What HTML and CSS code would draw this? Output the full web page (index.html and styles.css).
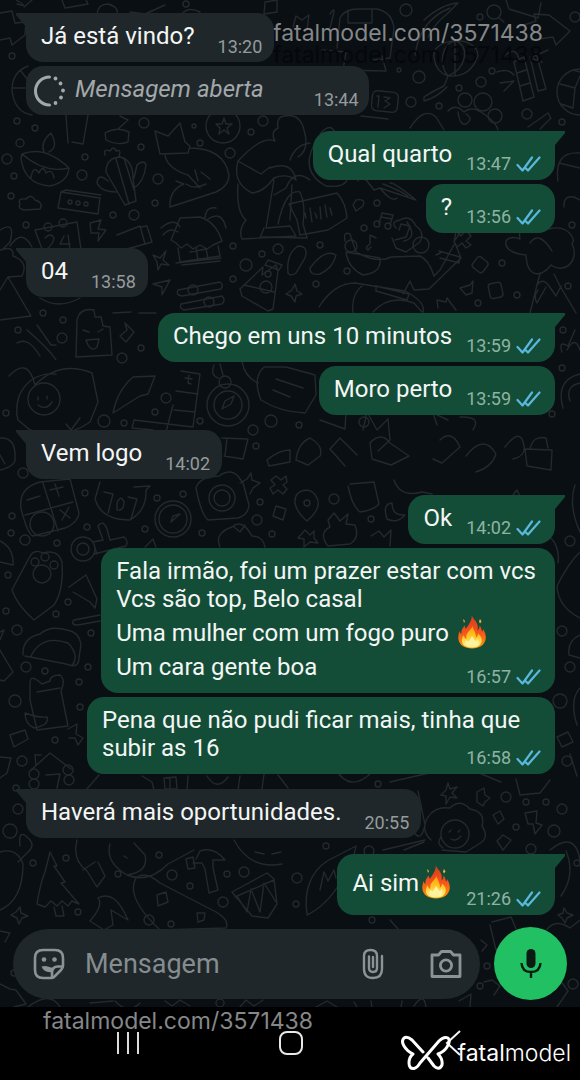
FILE: index.html
```html
<!DOCTYPE html>
<html lang="pt-BR">
<head>
<meta charset="utf-8">
<meta name="viewport" content="width=device-width, initial-scale=1">
<title>Conversa</title>
<link rel="stylesheet" href="styles.css">
</head>
<body>
<svg class="defs" width="0" height="0" aria-hidden="true">
  <defs>
    <linearGradient id="flame" x1="0" y1="0" x2="0" y2="1">
      <stop offset="0" stop-color="#d93a1c"/><stop offset=".5" stop-color="#f4511e"/><stop offset="1" stop-color="#ffa000"/>
    </linearGradient>
    <linearGradient id="core" x1="0" y1="0" x2="0" y2="1">
      <stop offset="0" stop-color="#ff9800"/><stop offset=".5" stop-color="#ffc928"/><stop offset="1" stop-color="#fff59d"/>
    </linearGradient>
    <symbol id="fire" viewBox="0 0 28 34">
      <path fill="url(#flame)" d="M13.600 0C14.500 3 18.500 6 19.500 10C20 12 19.800 14 19.500 15.500C21 14.500 21.500 12.500 21.500 10.500C23.500 12.500 23.500 15 24 16.500C24.800 16 25 15 25 14C27 17 28 20 27.800 23C27.200 30 21 33.500 14 33.500C7 33.500 .5 30 .3 23C.2 20 1 18 1.500 16C2 17.500 2.500 18.500 3.500 19C3 15 5 12.500 7 10.500C7 12 7.300 13 8 13.800C10.500 10 14.500 5 13.600 0Z"/>
      <path fill="#f9b234" d="M5 4L7 6L6 8L5.500 6ZM22 4L23.500 6.500L22 8.500L21 6.500Z"/>
      <path fill="url(#core)" d="M14.500 11C15 14 17 16 17.500 19C18 21 18 22 17.500 23C19.500 22 20 20 20 18.500C23 21 24.500 24 23.500 27C22 31.500 18 32.500 14 32.500C9 32.500 5 31 4 27C3.500 24 4.500 22 5.500 20.500C6 22 7 23.500 8.500 24C8 21 8.500 19 10.500 16.500C12 14.800 14 13 14.500 11Z"/>
      <path fill="#fff3a0" d="M14 21C16 23 16 25 17.500 26C19 25.500 19.500 24.500 19.500 23.500C22 27 20.500 32 14 32C7.500 32 6.500 27.500 8 25C9 26 10 26.500 11 26C12.500 25 12.500 23 14 21Z"/>
    </symbol>
    <symbol id="read" viewBox="0 0 25 16">
      <path fill="none" stroke="#59b8dc" stroke-width="2.200" stroke-linecap="round" stroke-linejoin="round" d="M1.500 9L6.500 14.500L16 1.500M10 12.500L12 14.500L23.500 1.500"/>
    </symbol>
  </defs>
</svg>

<main class="chat">
  <svg class="doodles" viewBox="0 0 580 1007" preserveAspectRatio="xMidYMin slice" aria-hidden="true">
    <g id="dots">
      <circle cx="186" cy="4" r="3"/><circle cx="406" cy="10" r="6"/><circle cx="12" cy="56" r="3"/><circle cx="17" cy="121" r="3"/><circle cx="35" cy="128" r="3"/><circle cx="144" cy="123" r="5"/><circle cx="194" cy="126" r="2"/><circle cx="263" cy="121" r="5"/><circle cx="251" cy="132" r="3"/><circle cx="20" cy="143" r="4"/><circle cx="7" cy="159" r="5"/><circle cx="85" cy="157" r="3"/><circle cx="141" cy="147" r="3"/><circle cx="200" cy="143" r="3"/><circle cx="230" cy="153" r="5"/><circle cx="82" cy="175" r="5"/><circle cx="158" cy="179" r="5"/><circle cx="14" cy="176" r="3"/><circle cx="11" cy="196" r="3"/><circle cx="155" cy="203" r="3"/><circle cx="113" cy="215" r="3"/><circle cx="134" cy="215" r="5"/><circle cx="26" cy="225" r="3"/><circle cx="233" cy="246" r="3"/><circle cx="246" cy="265" r="6"/><circle cx="262" cy="254" r="3"/><circle cx="278" cy="249" r="5"/><circle cx="233" cy="279" r="3"/><circle cx="43" cy="313" r="3"/><circle cx="63" cy="320" r="3"/><circle cx="18" cy="330" r="3"/><circle cx="62" cy="338" r="5"/><circle cx="141" cy="348" r="3"/><circle cx="122" cy="358" r="5"/><circle cx="419" cy="77" r="6"/><circle cx="399" cy="70" r="2"/><circle cx="492" cy="71" r="3"/><circle cx="481" cy="82" r="5"/><circle cx="459" cy="88" r="3"/><circle cx="411" cy="102" r="5"/><circle cx="439" cy="106" r="3"/><circle cx="465" cy="100" r="7"/><circle cx="483" cy="102" r="9"/><circle cx="495" cy="116" r="7"/><circle cx="527" cy="114" r="5"/><circle cx="562" cy="122" r="3"/><circle cx="575" cy="17" r="5"/><circle cx="480" cy="17" r="3"/><circle cx="377" cy="203" r="3"/><circle cx="364" cy="228" r="3"/><circle cx="320" cy="245" r="3"/><circle cx="347" cy="271" r="3"/><circle cx="316" cy="284" r="3"/><circle cx="502" cy="263" r="3"/><circle cx="517" cy="295" r="3"/><circle cx="478" cy="303" r="3"/><circle cx="568" cy="286" r="3"/><circle cx="572" cy="225" r="3"/><circle cx="563" cy="330" r="3"/><circle cx="562" cy="368" r="3"/><circle cx="166" cy="398" r="5"/><circle cx="271" cy="421" r="6"/><circle cx="200" cy="421" r="3"/><circle cx="364" cy="422" r="5"/><circle cx="299" cy="425" r="3"/><circle cx="552" cy="414" r="3"/><circle cx="6" cy="413" r="3"/><circle cx="104" cy="421" r="6"/><circle cx="124" cy="423" r="3"/><circle cx="155" cy="412" r="3"/><circle cx="253" cy="430" r="5"/><circle cx="256" cy="446" r="3"/><circle cx="23" cy="473" r="5"/><circle cx="85" cy="493" r="3"/><circle cx="157" cy="498" r="3"/><circle cx="183" cy="494" r="3"/><circle cx="257" cy="520" r="5"/><circle cx="260" cy="502" r="3"/><circle cx="12" cy="516" r="3"/><circle cx="25" cy="540" r="5"/><circle cx="11" cy="533" r="3"/><circle cx="57" cy="543" r="3"/><circle cx="87" cy="527" r="3"/><circle cx="145" cy="529" r="3"/><circle cx="202" cy="533" r="3"/><circle cx="272" cy="534" r="3"/><circle cx="334" cy="499" r="5"/><circle cx="371" cy="519" r="3"/><circle cx="8" cy="575" r="3"/><circle cx="68" cy="602" r="3"/><circle cx="6" cy="611" r="3"/><circle cx="56" cy="614" r="3"/><circle cx="17" cy="630" r="5"/><circle cx="91" cy="633" r="3"/><circle cx="26" cy="667" r="5"/><circle cx="45" cy="671" r="3"/><circle cx="88" cy="667" r="3"/><circle cx="79" cy="682" r="3"/><circle cx="15" cy="701" r="6"/><circle cx="80" cy="707" r="3"/><circle cx="55" cy="740" r="3"/><circle cx="22" cy="761" r="5"/><circle cx="16" cy="788" r="3"/><circle cx="18" cy="809" r="5"/><circle cx="10" cy="831" r="7"/><circle cx="570" cy="541" r="5"/><circle cx="562" cy="631" r="5"/><circle cx="570" cy="667" r="5"/><circle cx="560" cy="701" r="7"/><circle cx="567" cy="761" r="5"/><circle cx="33" cy="863" r="3"/><circle cx="66" cy="858" r="3"/><circle cx="118" cy="874" r="3"/><circle cx="159" cy="855" r="3"/><circle cx="172" cy="875" r="5"/><circle cx="190" cy="886" r="3"/><circle cx="227" cy="874" r="3"/><circle cx="244" cy="872" r="5"/><circle cx="223" cy="902" r="5"/><circle cx="78" cy="912" r="3"/><circle cx="149" cy="920" r="5"/><circle cx="171" cy="924" r="3"/><circle cx="326" cy="846" r="3"/><circle cx="369" cy="851" r="5"/><circle cx="297" cy="878" r="5"/><circle cx="296" cy="904" r="3"/><circle cx="378" cy="784" r="3"/><circle cx="506" cy="797" r="5"/><circle cx="526" cy="802" r="3"/><circle cx="546" cy="802" r="3"/><circle cx="562" cy="809" r="5"/><circle cx="554" cy="831" r="6"/><circle cx="516" cy="827" r="3"/><circle cx="531" cy="849" r="5"/><circle cx="577" cy="863" r="3"/><circle cx="372" cy="920" r="3"/><circle cx="487" cy="966" r="3"/><circle cx="573" cy="984" r="5"/><circle cx="480" cy="986" r="3"/><circle cx="220" cy="1003" r="4"/><circle cx="14" cy="973" r="3"/>
    </g>
    <g id="top-band">
      <path d="M0 13L12 11L15 23L26 22L25 35L12 45L10 38L0 40M16 0Q30 8 17 4M32 0L24 7M62 0L65 8L88 4L86 0M97 14Q98 4 108 4Q119 7 117 14M130 12L145 14L165 5M182 14Q188 6 200 12M265 2L277 0L277 12L264 14ZM28 66Q12 72 12 90Q14 112 32 115M20 70L28 80M13 88L25 88"/>
      <path d="M337 48L340 18Q345 9 358 9L377 9Q392 12 394 28L390 58L372 60M348 10L348 23L372 23L372 10M330 14Q336 5 333 16L330 28M293 27L296 16L302 20L309 15L307 30M322 50L346 52L343 70L386 71L382 56M415 55Q420 20 450 8M424 20Q442 4 458 3L447 14Q436 22 428 37"/>
      <path d="M434 58C430 37 478 34 478 56Q470 78 448 76Q436 72 434 58M448 76C438 64 442 42 456 41C470 46 467 68 448 76M455 41L455 76M448 76L444 86Q433 91 424 97L424 101Q436 98 447 87"/>
      <path d="M506 0L509 9L538 18L541 3M518 27L536 21L534 14L549 15L570 31L556 45L553 37L532 40"/>
      <circle cx="494" cy="12" r="7"/><path d="M499 18L504 22"/>
      <path d="M514 62L523 101L534 97L524 57ZM530 57L538 91L546 89L536 53ZM517 73L526 70M520 86L530 83M500 83L514 81L504 91M497 72Q508 68 514 75M542 62L530 58L548 50M504 56Q516 45 519 60"/>
      <circle cx="580" cy="92" r="23"/><path d="M560 84L575 88L580 76M575 88L573 108L561 104M580 72L573 70"/>
      <rect x="372" y="91" width="26" height="20" rx="5" transform="rotate(6 380 100)"/><path d="M377 96L379 96L378 107M384 97L390 98L385 101L390 104L384 108M361 116L388 119"/>
      <path d="M410 128Q424 106 436 117L444 130M448 111Q455 103 464 112Q472 105 484 114Q496 122 498 130M458 112Q460 126 466 124Q474 119 466 114M528 127L548 113L551 118L540 129M66 115L68 143M88 115L83 144L72 142M120 116L128 120L118 129M105 133Q117 126 129 132L128 142Q117 146 106 140Z"/>
    </g>
    <g id="second-band">
      <path d="M22 154Q45 145 69 168Q68 182 50 186Q24 184 21 158ZM22 154Q45 174 69 168M44 152Q40 142 51 133Q59 147 49 152M31 178Q33 164 39 173Q43 164 46 173Q52 168 54 178"/>
      <path d="M106 172Q106 158 120 157Q133 160 133 178L136 201L125 205ZM116 159L129 204M124 158L134 190M134 178L137 165Q144 159 146 165Q144 182 134 188M108 181Q98 172 97 183Q101 192 116 192M105 155Q103 148 110 151Q114 145 116 151Q122 149 119 156"/>
      <path d="M155 131L168 136L180 123L185 142L190 146L188 153L160 154ZM165 154Q166 168 188 175L200 188M190 148Q224 148 229 175Q229 186 216 192L170 207Q169 190 184 184L176 181M186 184Q194 190 206 184M195 170L198 181M201 172L210 179"/>
      <circle cx="223" cy="126" r="17"/><path d="M224 118L226 124L232 124L227 128L229 134L224 130L219 134L220 128L216 124L222 124Z"/>
      <path d="M61 192L100 198L98 214L58 208ZM61 192L66 190L101 195M20 204Q17 198 26 199Q31 193 35 200Q44 203 40 209L24 210Q17 208 20 204"/><circle cx="70" cy="202" r="2"/><circle cx="78" cy="203" r="2"/><circle cx="86" cy="204" r="2"/>
      <path d="M42 249L35 230L77 222L81 249M45 238Q51 232 54 238Q53 244 48 248M64 236L60 244L70 244M68 235L70 249"/><circle cx="48" cy="227" r="4"/><circle cx="63" cy="223" r="4"/>
      <path d="M90 223L101 220L98 229L106 230L98 241L99 233L91 233ZM117 235L140 226L145 244L123 250M141 227L147 226L152 242L145 244"/>
      <path d="M180 218L171 240L176 243L181 248L187 244L193 249L200 245L207 249L213 245L222 241Q216 222 200 217ZM178 248L180 262L220 256L218 246M176 263L221 258M182 265L220 261M190 252L206 249L208 258M161 228Q174 217 180 227M163 235Q170 227 178 232M205 218Q206 206 216 208M208 219Q222 210 226 228M196 248L198 260"/>
      <path d="M238 161Q262 135 275 141Q270 132 278 128Q276 117 284 116Q300 113 304 130Q310 150 298 157M238 161L261 174L270 167M238 161Q232 183 252 193Q264 192 274 178Q286 173 296 180Q292 160 270 168M238 184Q236 212 246 220Q238 230 242 239L296 236L290 226L266 228L274 180M264 228L260 238M292 185L290 220"/>
      <path d="M320 134Q332 120 336 136M290 160Q295 145 310 143M314 145Q300 172 326 186Q344 188 347 180M310 180Q294 168 286 188L274 195M278 224Q286 188 300 192Q306 205 303 224L307 238L261 237M289 204L337 193Q346 203 347 218L328 230L300 235L297 220L289 204ZM305 213L306 218M310 208L312 222M315 213L317 218M320 207L321 219M325 205L327 217M330 208L332 215"/>
      <path d="M358 181Q354 170 367 181L374 190L380 188L416 200Q394 182 390 183M380 188Q392 203 397 198M383 184Q399 190 408 196M353 205L356 200Q366 198 363 206L356 211ZM379 224L382 213L393 215L390 225M381 217L392 219"/><circle cx="377" cy="224" r="3"/><circle cx="388" cy="226" r="3"/>
      <path d="M558 181Q554 151 580 153M559 163L580 168M564 207Q563 195 574 197L580 200M399 230L401 224L410 226L406 237L395 240"/>
    </g>
    <g id="third-band">
      <path d="M0 230Q16 220 10 242L2 250M10 246Q22 228 32 247M0 250Q14 245 13 256Q29 262 22 276L8 277L31 316L0 320M8 277L0 290M40 298Q58 310 80 298M153 255L160 258L166 251L163 260L169 265L161 264L158 270L157 262ZM153 284L170 280L162 295L162 287Z"/>
      <path d="M178 290L220 282Q224 285 221 289L182 296Q175 295 178 290M181 304L222 296Q226 300 222 304L184 310Q179 308 181 304"/><circle cx="193" cy="290" r="5"/><circle cx="209" cy="302" r="5"/>
      <path d="M240 289L263 267L262 275L276 265L278 271L273 309L268 311L242 296ZM268 260L282 265L279 270L265 265ZM244 285L274 292M288 273Q286 254 298 246Q309 246 305 258L296 273Q290 277 288 273M310 268Q325 248 336 255Q333 268 320 274Q310 276 310 268M286 294L292 290L295 284L297 291L302 294L296 296L295 302L291 296Z"/><circle cx="268" cy="274" r="3"/><circle cx="266" cy="287" r="6"/>
      <path d="M345 241Q343 231 350 234L356 252Q377 264 391 257L420 256Q429 260 434 276L440 270L455 243L461 258L429 289L414 290L410 281L403 294M380 258Q382 273 363 275Q348 268 346 252ZM436 255L442 252M396 228Q390 222 400 220Q410 214 416 226Q425 232 420 242L406 252L396 248L392 238M407 222Q418 238 404 241M439 251L460 257L459 263L440 258"/><circle cx="351" cy="246" r="6"/><circle cx="421" cy="245" r="8"/>
      <path d="M371 247L368 250Q364 248 370 244L370 235L376 238M319 307Q334 283 355 283L405 291Q426 302 423 312M353 313Q351 294 362 286M376 286L409 294L407 300L376 291ZM373 312Q389 294 414 303L422 312M455 240L462 230M456 231L461 236L466 230L471 236L466 241L471 245L466 248L462 243L457 247L454 242ZM460 288L470 285L473 281L472 293L466 295ZM438 308L437 300L446 302L447 298L456 310"/>
      <rect x="474" y="258" width="13" height="13" rx="3" transform="rotate(38 480 264)"/><rect x="489" y="283" width="13" height="15" rx="3" transform="rotate(-12 495 290)"/>
      <path d="M526 255C498 253 502 232 520 239C516 215 542 212 549 229C567 224 577 239 572 244C580 260 565 275 551 265C541 278 527 278 526 255M530 243Q539 230 552 251M540 274L537 285L530 313M554 274L560 286L576 313M537 285Q543 277 549 286L556 296L561 286M538 290Q533 296 537 303L546 287"/>
      <path d="M76 357L77 320Q80 307 94 310L95 317L101 317L103 326L110 327L112 355ZM83 330L89 332M98 332L103 329M86 340L99 339L97 347Q92 352 88 345ZM113 313L131 312M139 313L156 313M120 336L127 330L125 323L134 332L126 342ZM17 343Q28 336 40 356M27 330Q50 350 56 360M37 325L51 345L56 345"/>
      <path d="M9 376Q28 356 35 385Q60 360 92 373L98 402L90 422Q65 440 30 430L18 420Q15 410 19 396Q30 372 56 374"/><circle cx="44" cy="399" r="16"/><path d="M38 397L38 400M47 396L47 399M38 405Q46 411 52 402M66 424L71 430L80 418"/>
      <path d="M115 405Q120 388 133 377L155 376L148 394L140 396L113 413ZM181 371L200 374L193 427L134 420L132 428L153 430L152 438M176 391L198 394M174 410L195 412M189 375L188 383L191 384M185 378L192 379M173 405L166 432"/>
      <circle cx="228" cy="405" r="21"/><circle cx="228" cy="405" r="14"/><circle cx="225" cy="382" r="6"/><path d="M222 409L225 401L234 396L231 404ZM214 365Q210 375 218 378M220 364L223 375M242 362Q245 377 258 383M264 367Q252 378 261 400Q280 412 305 413L316 395L315 375L286 367ZM276 379L303 388M273 390L290 397"/>
      <path d="M567 350Q575 335 580 350M562 352Q558 340 568 346L575 330M563 408Q555 380 580 374M570 401Q565 386 580 383"/>
    </g>
    <g id="fourth-band">
      <path d="M222 438L248 439L243 459L224 456M227 438L225 456M0 438Q16 437 15 458Q16 466 0 470M0 455L5 464M21 509Q18 488 40 482L70 479L79 513Q78 523 65 528L33 536Q28 535 21 509M43 483L58 531M25 515L73 502M27 500L40 496M50 490L63 487M55 484L59 496M60 510L70 518M69 507L62 520"/><circle cx="42" cy="524" r="12"/>
      <path d="M100 482L95 499Q101 520 130 520Q147 510 146 490L150 486L134 487M104 492L113 494L108 513M128 497L137 499L131 519M117 503Q121 494 124 502Q124 511 117 510Z"/>
      <circle cx="173" cy="519" r="18"/><circle cx="173" cy="519" r="14"/><path d="M171 522L173 516L180 514Z"/>
      <path d="M196 488Q199 477 219 476Q230 468 238 476L243 483L249 505Q248 515 238 518L208 520Q201 514 196 488M240 483L247 479L251 473L252 480L260 483L253 488L250 494M271 480L276 476L281 480L286 476L287 482L283 485L287 489L283 494L278 490L273 494L270 488L275 485ZM276 506L286 509L283 520L273 516ZM267 460Q279 450 290 450L290 462L269 466Z"/><circle cx="222" cy="498" r="13"/><circle cx="222" cy="498" r="8"/>
      <circle cx="83" cy="549" r="12"/><circle cx="83" cy="549" r="6"/><path d="M93 542L103 540L98 526Q103 519 107 529L110 540L124 537Q129 541 126 546L94 554M97 554L95 548M145 547L153 539L156 547M220 547Q214 533 232 527Q242 518 252 536Q263 536 265 547M234 527L240 532L245 525"/>
      <path d="M14 586L29 558Q34 548 43 553Q58 549 62 562Q64 590 54 605L34 620Q17 605 12 590Z"/><circle cx="42" cy="574" r="9"/><circle cx="35" cy="562" r="4"/><circle cx="45" cy="557" r="4"/><circle cx="54" cy="565" r="4"/>
      <path d="M69 587L86 575L97 599L95 608L90 602L73 592M100 615L74 620Q70 625 78 625L100 621M23 655Q22 638 40 634Q50 625 67 630Q79 632 81 644L79 658Q79 669 66 664L25 656M31 656Q42 634 68 643Q80 655 72 666M0 541Q14 548 13 565L0 562M0 632L4 630L0 640M0 650L13 672L4 681L0 680"/>
      <path d="M30 684Q30 675 37 680L42 684L50 681Q50 675 60 675Q66 680 61 691L68 726L37 730L30 700ZM37 692L60 688M25 713Q38 718 47 717Q50 725 34 728Q25 724 25 713M10 735L25 730L28 739L14 747ZM68 729L77 724L76 734L83 738L78 745L75 738L69 738M0 757L11 758L7 773L0 778M31 770L50 753L71 769M36 765L35 755L41 755M46 775L60 774L57 788"/><circle cx="34" cy="774" r="5"/><circle cx="68" cy="770" r="5"/><circle cx="34" cy="784" r="5"/><circle cx="69" cy="780" r="5"/>
      <circle cx="307" cy="503" r="3"/><path d="M307 490Q294 491 295 503Q297 513 307 521Q322 508 317 498Q314 491 307 490M350 484L374 482L379 504Q374 510 360 512Q352 506 348 486M392 503Q382 504 387 519Q397 524 405 515Q392 516 392 503M328 520L334 513L340 521L348 514L346 524L355 525Q360 538 350 544L328 546Q318 533 330 527ZM305 530L310 535L314 531L314 538L318 543L310 542L304 547L304 539L298 538ZM371 536L379 531L384 537L391 530L390 546M394 480Q400 498 422 492L432 494M320 420L345 429L346 412M363 430L367 412L377 430L388 419L390 440L378 451M460 417Q482 416 473 430M437 425L433 413L448 420"/>
      <path d="M440 440Q452 429 460 447L442 463L433 459M466 456Q484 433 496 454Q492 467 476 472M505 447Q521 426 524 446Q526 456 513 459M525 449L552 450L551 470L527 466ZM530 449Q533 435 546 438L548 448M370 443Q381 431 390 443L409 456L391 465L372 459ZM357 455L340 438L330 449L345 466M296 460Q298 443 310 438Q324 446 320 456L308 465Z"/>
      <path d="M575 485Q568 505 580 532M551 538Q560 548 558 563M580 552Q569 562 557 586Q558 607 580 618M580 635Q567 641 569 655L580 658M580 688Q569 700 577 725M557 737L568 732L573 742L562 747ZM570 754L577 776M509 500L517 490L522 501"/>
    </g>
    <g id="fifth-band">
      <path d="M86 790L99 775M142 776L152 782L154 790M188 776L187 790M164 778L176 777L177 789L165 789ZM170 778L170 789M207 776Q217 792 228 777M240 776L238 790M264 774L262 789M278 775L288 788M336 770Q350 792 370 774M390 782L438 771M479 773L501 782"/>
      <path d="M20 846Q18 828 28 838Q36 845 28 852L18 862M0 852Q17 847 23 864Q23 900 0 910M50 852L57 866L54 866L65 882L61 883L79 904L72 901L68 906L62 901L57 906L51 901L45 907L37 904Q40 884 45 872ZM54 907L56 916L64 916L62 906M11 915L16 912L20 907L21 913L28 916L22 918L19 924L17 918ZM77 840Q72 860 87 871L97 887L105 876L98 862M83 870L95 862M110 844Q105 862 127 875Q149 872 145 855L134 843M127 858L124 856M127 875Q148 884 168 864L194 850M186 859L193 857L195 868L188 869ZM193 863L202 863L205 869L209 893L218 890L213 868L213 860L225 860Q214 846 200 851L196 859"/>
      <path d="M136 878Q145 870 160 883L216 912Q230 920 226 928L160 930Q125 897 136 878M157 895L166 892L168 902L158 906ZM197 913L205 913L204 920L198 922ZM98 898Q115 889 128 920L111 910L113 925L104 930L90 921Q104 905 98 898M232 892L267 873L274 879L277 904L268 918L252 916ZM235 897L274 880M237 896L247 912L251 889L260 912L264 883L276 902M234 840Q250 870 282 864M255 852L264 854M272 854L281 852"/>
      <path d="M307 915Q302 878 327 861L356 846Q353 865 340 883Q326 906 307 915M320 890L324 872L328 881L334 870L336 878M383 850L425 840M390 920L398 929M404 850L424 842M414 832Q421 843 425 825L418 791M431 840Q420 830 428 817Q435 806 450 808Q460 798 470 809Q486 812 482 826Q490 838 479 844L466 852L442 850"/><circle cx="455" cy="834" r="14"/><path d="M449 832L451 830M458 832L460 830M451 839Q456 842 461 836M441 837Q436 844 443 848M448 783L450 789L457 787L452 793L457 798L450 797L446 804L446 796L441 795L446 790ZM477 792L484 788L485 795L490 798L485 802L483 806L477 802ZM493 815L500 811L504 819L498 824ZM525 813L537 811L536 823L542 825L535 834L533 824L528 824ZM497 841L503 835L511 840L503 850ZM516 779L520 795L540 793L550 780M550 850Q575 830 580 860M561 896Q576 875 566 851M558 915L563 913L564 908L567 913L573 915L567 918L565 923L562 918Z"/>
      <path d="M0 931L10 933L5 942M492 922L511 917L516 929M490 925L496 950L506 943M481 940L487 945L482 951M543 936Q552 916 570 928L580 920M484 982L492 980L500 986L494 995M541 990L560 980L568 991L557 1007M0 984L10 989L16 990L26 1004L14 1007M28 1007Q50 990 60 1007M90 1003L113 1001M115 1001Q128 1015 140 1003M165 1001L172 1006L180 1000L190 1006M240 1007L246 1000L254 1006L263 1000M316 1007L327 1001L337 1007M354 1002L357 1007M371 1001L372 1007M402 1001L401 1007M414 1006Q424 991 426 1007M459 1001L471 994L470 1007"/>
    </g>
  </svg>

  <p class="watermark watermark-top">fatalmodel.com/3571438</p>
  <p class="watermark watermark-shade" aria-hidden="true">fatalmodel.com/3571438</p>

  <section class="messages" aria-label="Mensagens">
    <article class="bubble in tail"><p class="text">Já está vindo?</p><time class="time">13:20</time></article>
    <article class="bubble in opened">
      <svg class="once" viewBox="0 0 32 32" aria-hidden="true"><path fill="none" stroke="#a3a8aa" stroke-width="3" stroke-linecap="round" d="M15.500 2A14 14 0 0 0 15.500 30"/><g fill="#a3a8aa"><circle cx="21.500" cy="3.500" r="1.900"/><circle cx="26.500" cy="8.500" r="1.900"/><circle cx="29" cy="15.500" r="1.900"/><circle cx="27" cy="22.500" r="1.900"/><circle cx="21.500" cy="28" r="1.900"/></g></svg>
      <p class="text">Mensagem aberta</p><time class="time">13:44</time></article>
    <article class="bubble out tail"><p class="text">Qual quarto</p><time class="time">13:47<svg class="read" role="img" aria-label="Lida"><use href="#read"/></svg></time></article>
    <article class="bubble out"><p class="text">?</p><time class="time">13:56<svg class="read" role="img" aria-label="Lida"><use href="#read"/></svg></time></article>
    <article class="bubble in tail"><p class="text">04</p><time class="time">13:58</time></article>
    <article class="bubble out tail"><p class="text">Chego em uns 10 minutos</p><time class="time">13:59<svg class="read" role="img" aria-label="Lida"><use href="#read"/></svg></time></article>
    <article class="bubble out"><p class="text">Moro perto</p><time class="time">13:59<svg class="read" role="img" aria-label="Lida"><use href="#read"/></svg></time></article>
    <article class="bubble in tail"><p class="text">Vem logo</p><time class="time">14:02</time></article>
    <article class="bubble out tail"><p class="text">Ok</p><time class="time">14:02<svg class="read" role="img" aria-label="Lida"><use href="#read"/></svg></time></article>
    <article class="bubble out stacked">
      <div class="text"><p>Fala irmão, foi um prazer estar com vcs</p><p>Vcs são top, Belo casal</p><p class="with-emoji">Uma mulher com um fogo puro <svg class="fire" role="img" aria-label="fogo"><use href="#fire"/></svg></p><p>Um cara gente boa</p></div>
      <time class="time">16:57<svg class="read" role="img" aria-label="Lida"><use href="#read"/></svg></time></article>
    <article class="bubble out stacked"><p class="text">Pena que não pudi ficar mais, tinha que subir as 16</p><time class="time">16:58<svg class="read" role="img" aria-label="Lida"><use href="#read"/></svg></time></article>
    <article class="bubble in tail"><p class="text">Haverá mais oportunidades.</p><time class="time">20:55</time></article>
    <article class="bubble out tail"><p class="text with-emoji">Ai sim<svg class="fire" role="img" aria-label="fogo"><use href="#fire"/></svg></p><time class="time">21:26<svg class="read" role="img" aria-label="Lida"><use href="#read"/></svg></time></article>
  </section>

  <form class="composer">
    <div class="field">
      <button class="tool" type="button" aria-label="Figurinhas"><svg viewBox="0 0 32 32" width="32" height="32"><g fill="none" stroke="#8b9396" stroke-width="2.600" stroke-linejoin="round"><path d="M10 2H22Q30 2 30 10V18Q30 20 28 22L21 29Q20 30 18 30H10Q2 30 2 22V10Q2 2 10 2Z"/><path d="M19 30V25Q19 18.500 25 18.500H30"/></g><g fill="#8b9396"><circle cx="11" cy="11.500" r="2.300"/><circle cx="21.500" cy="11.500" r="2.300"/><path d="M8.500 18.500Q13 17 18 19.500Q21 20 23.500 18.500Q20 22 19 24Q11 25 8.500 18.500Z"/></g></svg></button>
      <input class="input" type="text" placeholder="Mensagem" aria-label="Mensagem">
      <button class="tool clip" type="button" aria-label="Anexar"><svg viewBox="0 0 22 32" width="22" height="32"><path fill="none" stroke="#8b9396" stroke-width="2.400" stroke-linecap="round" d="M20 8V21Q20 30 11 30Q2 30 2 21V8Q2 2 8.500 2Q15 2 15 8V20Q15 24 11 24Q7 24 7 20V8.500"/><path fill="none" stroke="#8b9396" stroke-width="2.400" stroke-linecap="round" d="M11 9V19"/></svg></button>
      <button class="tool" type="button" aria-label="Câmera"><svg viewBox="0 0 32 30" width="32" height="30"><g fill="none" stroke="#8b9396" stroke-width="2.800" stroke-linejoin="round"><path d="M2 6H8.500L11.500 2.500H20.500L23.500 6H30V27.500H2Z"/><circle cx="16" cy="16.500" r="5.600"/></g></svg></button>
    </div>
    <button class="mic" type="button" aria-label="Gravar áudio"><svg viewBox="0 0 22 30" width="22" height="30"><rect x="6.500" y="0" width="9" height="19" rx="4.500" fill="#0b1b14"/><path fill="none" stroke="#0b1b14" stroke-width="2.400" d="M1.500 14Q2 23 11 23Q20 23 20.500 14M11 23V29"/></svg></button>
  </form>
</main>

<footer class="system">
  <p class="watermark watermark-bottom">fatalmodel.com/3571438</p>
  <nav class="keys" aria-label="Navegação">
    <button class="key" type="button" aria-label="Recentes"><svg viewBox="0 0 26 26" width="26" height="26"><path fill="none" stroke="#dcdcdc" stroke-width="2" d="M3 2V24M13 2V24M23 2V24"/></svg></button>
    <button class="key" type="button" aria-label="Início"><svg viewBox="0 0 26 26" width="26" height="26"><rect x="2" y="2" width="22" height="22" rx="7" fill="none" stroke="#e8e8e8" stroke-width="2"/></svg></button>
    <button class="key" type="button" aria-label="Voltar"><svg viewBox="0 0 26 26" width="26" height="26"><path fill="none" stroke="#f4f4f4" stroke-width="2" d="M19 1L6 13L19 25"/></svg></button>
  </nav>
  <div class="brand">
    <svg viewBox="0 0 50 36" width="50" height="36" aria-hidden="true"><g fill="none" stroke="#fff" stroke-width="3" stroke-linecap="round" stroke-linejoin="round"><path d="M22 17L11 5Q6 1 3 3Q0 6 3 11Q6 16 12 19Q8 22 8 28Q8 34 13 33.500Q16 33 19 28L38 6Q43 1 47 3Q50 6 46 12Q43 17 37 19Q42 24 41 30Q38 36 33 31L27 23"/></g></svg>
    <span class="brand-name"><b>fatal</b>model</span>
  </div>
</footer>
</body>
</html>
```
FILE: styles.css
```css
* {
  box-sizing: border-box;
}

body {
  display: flex;
  flex-direction: column;
  min-height: 100vh;
  margin: 0;
  background: #000;
  color: #f3f6f5;
  font-family: Roboto, "Noto Sans", sans-serif;
}

p {
  margin: 0;
}

button {
  padding: 0;
  border: 0;
  background: none;
}

svg {
  display: block;
}

.defs {
  position: absolute;
}

.chat {
  position: relative;
  display: flex;
  flex: 1;
  flex-direction: column;
  overflow: hidden;
  background: #0a0f13;
}

.doodles {
  position: absolute;
  inset: 0;
  width: 100%;
  height: 100%;
  fill: none;
  stroke: #23292c;
  stroke-width: 1.4;
  stroke-linejoin: round;
  stroke-linecap: round;
}

.messages {
  position: relative;
  display: flex;
  flex: 1;
  flex-direction: column;
  align-items: flex-start;
  gap: 4px;
  padding: 13px 25px 12px 26px;
}

.bubble {
  position: relative;
  display: flex;
  max-width: 88%;
  padding: 0 12px 0 15px;
  border-radius: 17px;
  font-size: 24px;
  line-height: 28px;
}

.in {
  gap: 23px;
  background: #1f272a;
}

.out {
  align-self: flex-end;
  gap: 14px;
  padding-right: 14px;
  background: #144d37;
}

.in.tail:not(:first-child) {
  margin-top: 11px;
}

.out.tail {
  margin-top: 12px;
  border-top-right-radius: 0;
}

.in.tail {
  border-top-left-radius: 0;
}

.tail::before {
  position: absolute;
  top: 0;
  width: 10px;
  height: 14px;
  background: inherit;
  content: "";
}

.in.tail::before {
  right: 100%;
  clip-path: polygon(0 0, 100% 0, 100% 100%, 0 2px);
}

.out.tail::before {
  left: 100%;
  clip-path: polygon(0 0, 100% 0, 100% 2px, 0 100%);
}

.text {
  padding: 9px 0 12px;
}

.time {
  display: flex;
  align-items: center;
  align-self: flex-end;
  gap: 5px;
  margin-bottom: 5px;
  color: #959b9d;
  font-size: 18px;
  line-height: 21px;
}

.out .time {
  margin-bottom: 6px;
  color: #8fb3a3;
}

.read {
  width: 25px;
  height: 16px;
}

.opened {
  gap: 9px;
  padding: 0 10px 0 8px;
  color: #a3a8aa;
  font-style: italic;
}

.opened .time {
  margin-left: 41px;
  font-style: normal;
}

.once {
  align-self: center;
  width: 32px;
  height: 32px;
}

.stacked {
  display: grid;
  max-width: 468px;
}

.stacked .text,
.stacked .time {
  grid-area: 1 / 1;
}

.stacked .text {
  padding-right: 5px;
}

.stacked .time {
  justify-self: end;
}

.with-emoji {
  height: 40px;
  line-height: 40px;
}

.text.with-emoji {
  height: 61px;
}

.fire {
  display: inline-block;
  width: 28px;
  height: 34px;
  margin: 0 2px 0 3px;
  vertical-align: -8px;
}

.composer {
  position: relative;
  display: flex;
  align-items: center;
  gap: 14px;
  padding: 0 13px 7px;
}

.field {
  display: flex;
  flex: 1;
  align-items: center;
  min-width: 0;
  height: 70px;
  padding: 0 18px 0 20px;
  border-radius: 35px;
  background: #1f272a;
}

.input {
  flex: 1;
  min-width: 0;
  padding: 0 0 0 20px;
  border: 0;
  outline: 0;
  background: none;
  color: #f3f6f5;
  font: 27px Roboto, "Noto Sans", sans-serif;
}

.input::placeholder {
  color: #858d90;
  opacity: 1;
}

.clip {
  margin-right: 46px;
}

.mic {
  display: grid;
  flex: none;
  place-items: center;
  width: 73px;
  height: 73px;
  border-radius: 50%;
  background: #21c063;
}

.system {
  position: relative;
  flex: none;
  height: 73px;
  background: #000;
}

.keys {
  display: flex;
  justify-content: space-between;
  padding: 23px 113px 0 115px;
}

.brand {
  position: absolute;
  right: 9px;
  bottom: 9px;
  display: flex;
  align-items: center;
  gap: 7px;
}

.brand-name {
  color: #fff;
  font: 300 23px/24px Inter, sans-serif;
}

.watermark {
  position: absolute;
  color: #858789;
  font: 400 23px/21px Inter, sans-serif;
  white-space: nowrap;
}

.watermark-top {
  top: 23px;
  left: 273px;
}

.watermark-shade {
  top: 45px;
  left: 273px;
  color: #05080a;
}

.watermark-bottom {
  top: 4px;
  left: 43px;
}
```
